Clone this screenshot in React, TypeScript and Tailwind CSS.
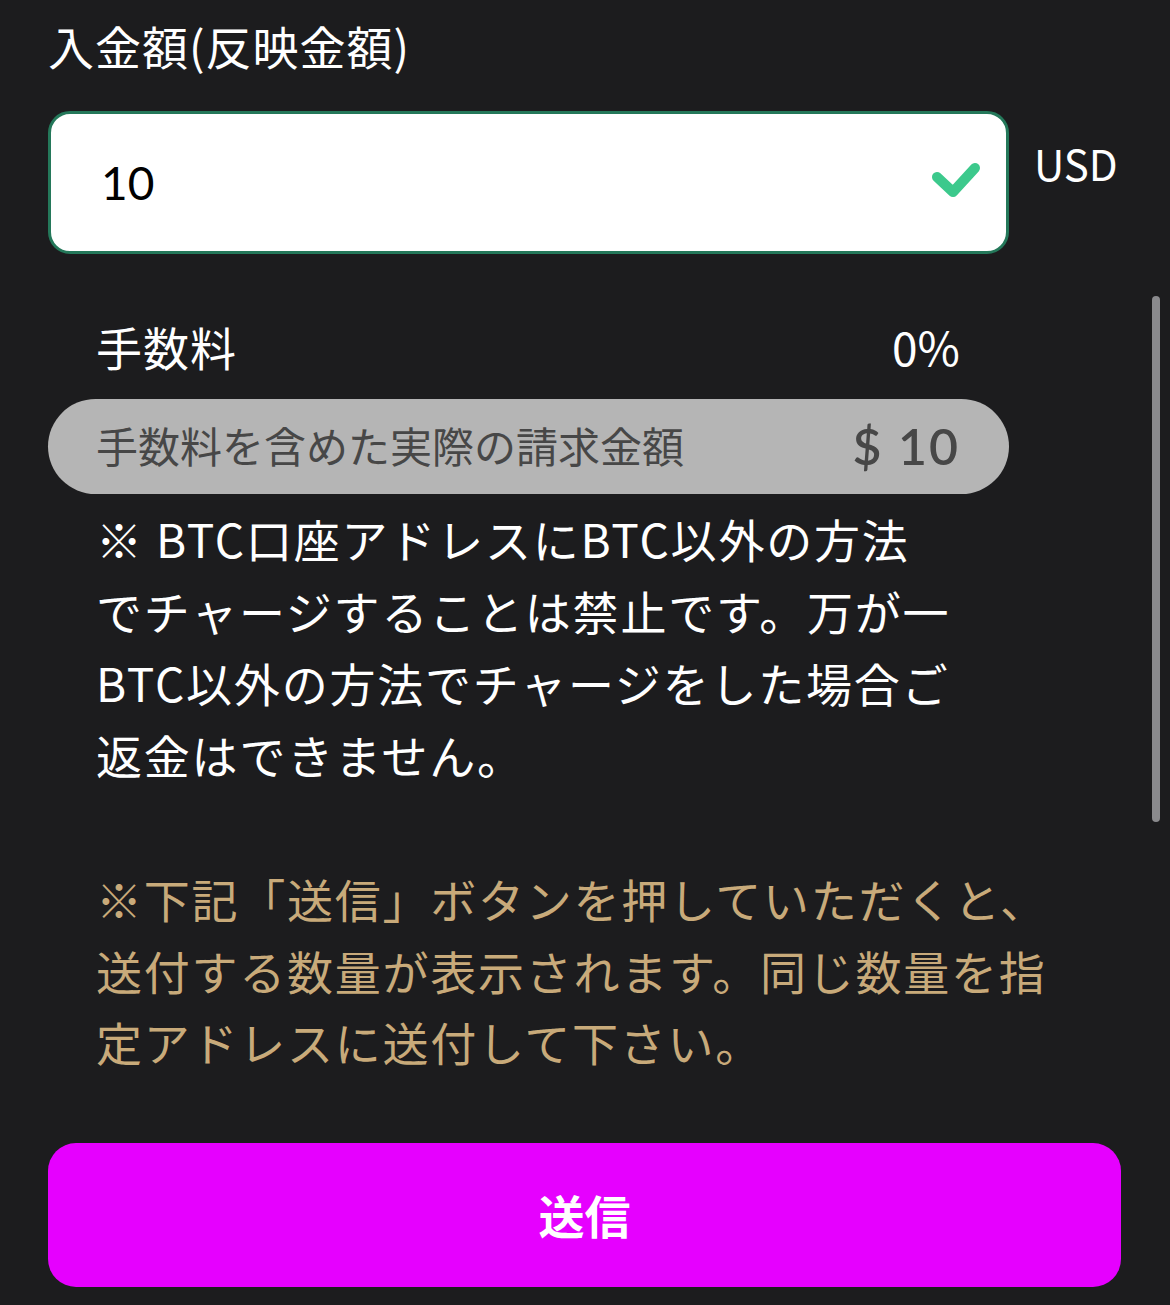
const FONT = 'font-["Noto_Sans_CJK_JP","Noto_Sans",sans-serif]';

const WARNING_LINES = [
  '※ BTC口座アドレスにBTC以外の方法',
  'でチャージすることは禁止です。万が一',
  'BTC以外の方法でチャージをした場合ご',
  '返金はできません。',
];

const NOTE_LINES = [
  '※下記「送信」ボタンを押していただくと、',
  '送付する数量が表示されます。同じ数量を指',
  '定アドレスに送付して下さい。',
];

const CheckIcon = () => (
  <svg width="50" height="40" viewBox="0 0 50 40" fill="none">
    <path
      d="M7 17 L23 32 L45 8"
      stroke="#3cc98c"
      strokeWidth="10"
      strokeLinecap="round"
      strokeLinejoin="round"
    />
  </svg>
);

export default function App() {
  return (
    <div className={`relative h-[1305px] w-[1170px] overflow-hidden bg-[#1c1c1e] px-[48px] ${FONT}`}>
      {/* label */}
      <div className="pt-[9px] text-[46px] leading-[72px] tracking-[1px] text-white">入金額(反映金額)</div>

      {/* amount input */}
      <div className="mt-[30px] flex items-start">
        <div className="flex h-[143px] w-[961px] items-center justify-between rounded-[22px] border-[3px] border-[#24785a] bg-white pl-[50px] pr-[26px]">
          <span className='font-["Lato",sans-serif] text-[46px] text-black'>10</span>
          <span className="mb-[5px]">
            <CheckIcon />
          </span>
        </div>
        <span className="ml-[25px] pt-[24px] text-[42px] leading-[56px] text-white">USD</span>
      </div>

      {/* fee */}
      <div className="mt-[56px] flex w-[961px] items-center justify-between pl-[48px] pr-[49px] text-[46px] leading-[72px] text-white">
        <span className="tracking-[1px]">手数料</span>
        <span>0%</span>
      </div>

      {/* total pill */}
      <div className="mt-[17px] flex h-[95px] w-[961px] items-center justify-between rounded-full bg-[#b5b5b5] pl-[48px] pr-[49px] text-[#474747]">
        <span className="mt-[-4px] text-[42px]">手数料を含めた実際の請求金額</span>
        <span className='font-["Lato",sans-serif] text-[50px] font-semibold tracking-[2px]'>$ 10</span>
      </div>

      {/* warning */}
      <div className="mt-[8px] pl-[48px] text-[46px] leading-[72px] tracking-[1.8px] text-white">
        {WARNING_LINES.map((line) => (
          <div key={line} className="whitespace-nowrap">{line}</div>
        ))}
      </div>

      {/* note */}
      <div className="mt-[73px] pl-[48px] text-[46px] leading-[71.5px] tracking-[1.75px] text-[#c8aa7a]">
        {NOTE_LINES.map((line) => (
          <div key={line} className="whitespace-nowrap">{line}</div>
        ))}
      </div>

      {/* submit */}
      <button className="mt-[65px] flex h-[144px] w-[1073px] items-center justify-center rounded-[28px] bg-[#e600ff] text-[46px] font-bold text-white">
        送信
      </button>

      {/* scrollbar */}
      <div className="absolute left-[1152px] top-[296px] h-[526px] w-[8px] rounded-full bg-[#8a8a8d]" />
    </div>
  );
}
